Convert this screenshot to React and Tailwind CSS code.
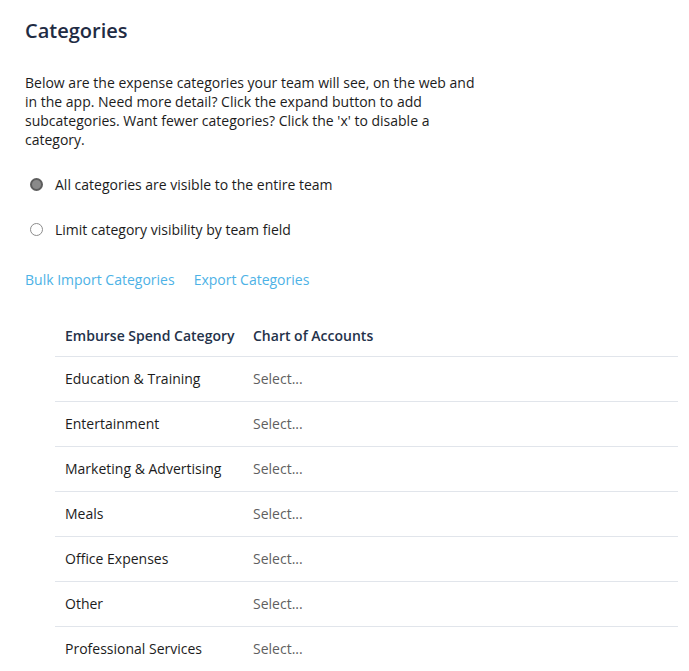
import { useState } from "react";

const CATEGORIES = [
  "Education & Training",
  "Entertainment",
  "Marketing & Advertising",
  "Meals",
  "Office Expenses",
  "Other",
  "Professional Services",
];

const Radio = ({ checked, label, onChange }) => (
  <label className="flex items-center h-5 cursor-pointer" onClick={onChange}>
    <span
      className={`w-[13px] h-[13px] rounded-full border ml-[5px] ${
        checked
          ? "bg-[#8a8a8a] border-[#5d5d5d] border-2"
          : "bg-white border-[#8c8c8c]"
      }`}
    />
    <span className="ml-[12px] text-[14px] text-[#1c1c1c]">{label}</span>
  </label>
);

export default function App() {
  const [visibility, setVisibility] = useState("all");

  return (
    <div
      className="bg-white h-screen pl-[25px] pr-[11px] pt-[17px] overflow-hidden"
      style={{ fontFamily: '"Open Sans", "Liberation Sans", sans-serif' }}
    >
      <h1 className="text-[20px] leading-[28px] font-semibold text-[#1f2c44]">
        Categories
      </h1>

      <p className="mt-[28px] w-[452px] text-[14px] leading-[19px] text-[#1c1c1c]">
        Below are the expense categories your team will see, on the web and in
        the app. Need more detail? Click the expand button to add subcategories.
        Want fewer categories? Click the 'x' to disable a category.
      </p>

      {/* visibility options */}
      <div className="mt-[25px] flex flex-col gap-[25px]">
        <Radio
          checked={visibility === "all"}
          label="All categories are visible to the entire team"
          onChange={() => setVisibility("all")}
        />
        <Radio
          checked={visibility === "field"}
          label="Limit category visibility by team field"
          onChange={() => setVisibility("field")}
        />
      </div>

      <div className="mt-[30px] flex items-center gap-[19px] h-5 text-[14px] text-[#4db2e6]">
        <a href="#" className="hover:underline">
          Bulk Import Categories
        </a>
        <a href="#" className="hover:underline">
          Export Categories
        </a>
      </div>

      {/* category mapping table */}
      <table className="mt-[27px] ml-[30px] w-[623px] text-[14px] border-collapse">
        <thead>
          <tr className="h-[40px] border-b border-[#e1e5eb]">
            <th className="w-[198px] px-[10px] text-left font-semibold text-[#24324a] whitespace-nowrap">
              Emburse Spend Category
            </th>
            <th className="px-0 text-left font-semibold text-[#24324a] whitespace-nowrap">
              Chart of Accounts
            </th>
          </tr>
        </thead>
        <tbody>
          {CATEGORIES.map((name) => (
            <tr key={name} className="h-[45px] border-b border-[#e1e5eb]">
              <td className="px-[10px] text-[#1c1c1c] whitespace-nowrap">{name}</td>
              <td className="text-[#5f5f5f]">Select...</td>
            </tr>
          ))}
        </tbody>
      </table>
    </div>
  );
}
